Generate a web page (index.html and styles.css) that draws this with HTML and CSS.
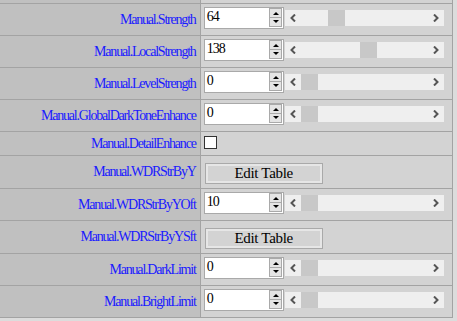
FILE: index.html
```html
<!DOCTYPE html>
<html lang="en">
<head>
  <meta charset="UTF-8" />
  <title>Manual settings</title>
  <link rel="stylesheet" href="styles.css">
</head>
<body>
  <div class="grid">
    <div class="row stub"><div class="name"></div><div class="val"></div></div>

    <div class="row">
      <div class="name">Manual.Strength</div>
      <div class="val">
        <div class="num"><span>64</span><div class="spin"><i class="up"></i><i class="down"></i></div></div>
        <div class="bar">
          <b class="arr"><svg width="6" height="8" viewBox="0 0 6 8"><path d="M5 0.5 L1.5 4 L5 7.5" /></svg></b>
          <div class="track"><div class="thumb" style="margin-left: 27px"></div></div>
          <b class="arr"><svg width="6" height="8" viewBox="0 0 6 8"><path d="M1 0.5 L4.5 4 L1 7.5" /></svg></b>
        </div>
      </div>
    </div>

    <div class="row">
      <div class="name">Manual.LocalStrength</div>
      <div class="val">
        <div class="num"><span>138</span><div class="spin"><i class="up"></i><i class="down"></i></div></div>
        <div class="bar">
          <b class="arr"><svg width="6" height="8" viewBox="0 0 6 8"><path d="M5 0.5 L1.5 4 L5 7.5" /></svg></b>
          <div class="track"><div class="thumb" style="margin-left: 59px"></div></div>
          <b class="arr"><svg width="6" height="8" viewBox="0 0 6 8"><path d="M1 0.5 L4.5 4 L1 7.5" /></svg></b>
        </div>
      </div>
    </div>

    <div class="row">
      <div class="name">Manual.LevelStrength</div>
      <div class="val">
        <div class="num"><span>0</span><div class="spin"><i class="up"></i><i class="down"></i></div></div>
        <div class="bar">
          <b class="arr"><svg width="6" height="8" viewBox="0 0 6 8"><path d="M5 0.5 L1.5 4 L5 7.5" /></svg></b>
          <div class="track"><div class="thumb"></div></div>
          <b class="arr"><svg width="6" height="8" viewBox="0 0 6 8"><path d="M1 0.5 L4.5 4 L1 7.5" /></svg></b>
        </div>
      </div>
    </div>

    <div class="row">
      <div class="name">Manual.GlobalDarkToneEnhance</div>
      <div class="val">
        <div class="num"><span>0</span><div class="spin"><i class="up"></i><i class="down"></i></div></div>
        <div class="bar">
          <b class="arr"><svg width="6" height="8" viewBox="0 0 6 8"><path d="M5 0.5 L1.5 4 L5 7.5" /></svg></b>
          <div class="track"><div class="thumb"></div></div>
          <b class="arr"><svg width="6" height="8" viewBox="0 0 6 8"><path d="M1 0.5 L4.5 4 L1 7.5" /></svg></b>
        </div>
      </div>
    </div>

    <div class="row short">
      <div class="name">Manual.DetailEnhance</div>
      <div class="val"><div class="check"></div></div>
    </div>

    <div class="row tall">
      <div class="name">Manual.WDRStrByY</div>
      <div class="val"><div class="btn">Edit Table</div></div>
    </div>

    <div class="row">
      <div class="name">Manual.WDRStrByYOft</div>
      <div class="val">
        <div class="num"><span>10</span><div class="spin"><i class="up"></i><i class="down"></i></div></div>
        <div class="bar">
          <b class="arr"><svg width="6" height="8" viewBox="0 0 6 8"><path d="M5 0.5 L1.5 4 L5 7.5" /></svg></b>
          <div class="track"><div class="thumb"></div></div>
          <b class="arr"><svg width="6" height="8" viewBox="0 0 6 8"><path d="M1 0.5 L4.5 4 L1 7.5" /></svg></b>
        </div>
      </div>
    </div>

    <div class="row tall">
      <div class="name">Manual.WDRStrByYSft</div>
      <div class="val"><div class="btn">Edit Table</div></div>
    </div>

    <div class="row">
      <div class="name">Manual.DarkLimit</div>
      <div class="val">
        <div class="num"><span>0</span><div class="spin"><i class="up"></i><i class="down"></i></div></div>
        <div class="bar">
          <b class="arr"><svg width="6" height="8" viewBox="0 0 6 8"><path d="M5 0.5 L1.5 4 L5 7.5" /></svg></b>
          <div class="track"><div class="thumb"></div></div>
          <b class="arr"><svg width="6" height="8" viewBox="0 0 6 8"><path d="M1 0.5 L4.5 4 L1 7.5" /></svg></b>
        </div>
      </div>
    </div>

    <div class="row">
      <div class="name">Manual.BrightLimit</div>
      <div class="val">
        <div class="num"><span>0</span><div class="spin"><i class="up"></i><i class="down"></i></div></div>
        <div class="bar">
          <b class="arr"><svg width="6" height="8" viewBox="0 0 6 8"><path d="M5 0.5 L1.5 4 L5 7.5" /></svg></b>
          <div class="track"><div class="thumb"></div></div>
          <b class="arr"><svg width="6" height="8" viewBox="0 0 6 8"><path d="M1 0.5 L4.5 4 L1 7.5" /></svg></b>
        </div>
      </div>
    </div>
  </div>
</body>
</html>
```

FILE: styles.css
```css
body {
  margin: 0;
  background: #dcdcdc;
  font-family: "Liberation Serif", "DejaVu Serif", serif;
}
.grid { width: 453px; }
.row {
  display: flex;
  height: 31px;
  border-bottom: 1px solid #a3a3a3;
}
.row.stub { height: 3px; }
.row.short { height: 23px; }
.row.tall { height: 32px; }
.name {
  width: 197px;
  padding-right: 4px;
  border-right: 1px solid #a3a3a3;
  background: #c0c0c0;
  color: #1a1aff;
  font-size: 14px;
  letter-spacing: -1.2px;
  display: flex;
  align-items: center;
  justify-content: flex-end;
}
.val {
  width: 250px;
  border-right: 1px solid #a3a3a3;
  background: #d3d3d3;
  display: flex;
  align-items: flex-start;
  padding: 3px 0 0 3px;
}

/* number box with spinner */
.num {
  width: 78px;
  height: 20px;
  border: 1px solid #a9a9a9;
  background: #fff;
  display: flex;
  justify-content: space-between;
}
.num span {
  font-size: 14px;
  letter-spacing: -1px;
  line-height: 16px;
  padding: 1px 0 0 2px;
  color: #000;
}
.spin {
  width: 13px;
  margin: 0 1px 1px 0;
  display: flex;
  flex-direction: column;
}
.spin i {
  flex: 1;
  background: #e4e4e4;
  border: 1px solid #a9a9a9;
  position: relative;
}
.spin i.down { border-top: 0; }
.spin i::after {
  content: "";
  position: absolute;
  left: 3px;
  top: 3px;
  border-left: 3px solid transparent;
  border-right: 3px solid transparent;
}
.spin i.up::after { border-bottom: 3px solid #000; }
.spin i.down::after { border-top: 3px solid #000; top: 2px; }

/* scrollbar-like slider */
.bar {
  margin: 3px 0 0 1px;
  width: 159px;
  height: 16px;
  background: #efefef;
  display: flex;
}
.arr {
  width: 16px;
  display: flex;
  align-items: center;
  justify-content: center;
}
.arr path {
  fill: none;
  stroke: #555;
  stroke-width: 2;
}
.track { flex: 1; }
.thumb {
  width: 17px;
  height: 16px;
  background: #c8c8c8;
}

.check {
  margin: 1px 0 0 0;
  width: 11px;
  height: 11px;
  border: 1px solid #333;
  background: #fff;
}
.btn {
  margin: 4px 0 0 1px;
  width: 116px;
  height: 19px;
  border: 1px solid #a9a9a9;
  box-shadow: inset 0 0 0 2px #e6e6e6;
  background: #d3d3d3;
  font-size: 15px;
  letter-spacing: -0.3px;
  line-height: 19px;
  text-align: center;
  color: #000;
}
```
